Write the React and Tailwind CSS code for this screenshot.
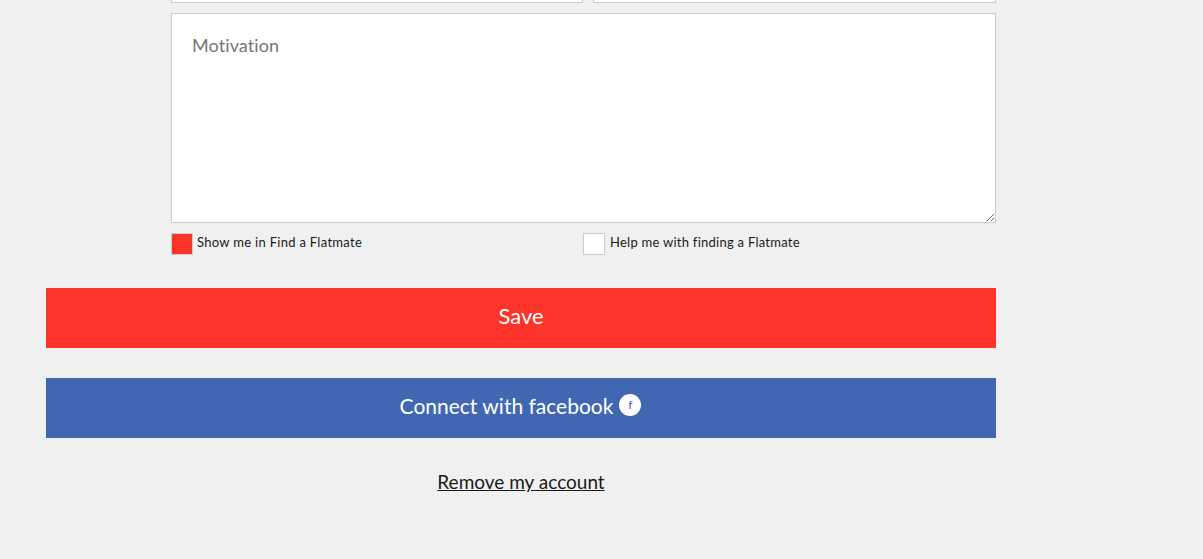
import React from "react";

const App = () => {
    return (
        <div className="min-h-[559px] bg-[#f0f0f0] overflow-hidden font-['Lato','Liberation_Sans',sans-serif]">
            <div className="w-[950px] ml-[46px]">
                <div className="pl-[125px]">
                    {/* Inputs scrolled off the top */}
                    <div className="flex gap-[10px] h-[3px]">
                        <div className="w-[412px] bg-white border-x border-b border-[#cccccc]" />
                        <div className="w-[403px] bg-white border-x border-b border-[#cccccc]" />
                    </div>
                    <textarea
                        placeholder="Motivation"
                        className="block w-[825px] h-[210px] mt-[10px] px-5 pt-[19px] pb-5 bg-white border border-[#cccccc] outline-none text-[18px] tracking-[0.1px] leading-[24px] text-[#333] placeholder:text-[#757575] resize"
                    />
                    <div className="flex mt-[10px]">
                        <label className="flex items-start w-[412px]">
                            <span className="w-[22px] h-[22px] bg-[#fc342a] border border-[#cccccc]" />
                            <span className="ml-1 text-[13px] leading-[18px] text-[#1a1a1a] tracking-[0.3px]">Show me in Find a Flatmate</span>
                        </label>
                        <label className="flex items-start">
                            <span className="w-[22px] h-[22px] bg-white border border-[#cccccc]" />
                            <span className="ml-[5px] text-[13px] leading-[18px] text-[#1a1a1a] tracking-[0.26px]">Help me with finding a Flatmate</span>
                        </label>
                    </div>
                </div>

                <button className="block w-full h-[60px] mt-[33px] bg-[#fc342a] text-white text-[22px] leading-[55px] text-center pb-[5px]">
                    Save
                </button>

                <button className="flex items-center justify-center w-full h-[60px] mt-[30px] pr-px bg-[#4267b2] text-white text-[21px]">
                    <span className="mb-1">Connect with facebook</span>
                    <span className="flex items-center justify-center w-[22px] h-[22px] ml-[6px] mb-[7px] rounded-full bg-white text-[#4267b2] text-[12px]">f</span>
                </button>

                <div className="mt-[31px] text-center">
                    <a href="#" className="text-[19px] leading-[26px] text-[#1a1a1a] underline">Remove my account</a>
                </div>
            </div>
        </div>
    );
};

export default App;
